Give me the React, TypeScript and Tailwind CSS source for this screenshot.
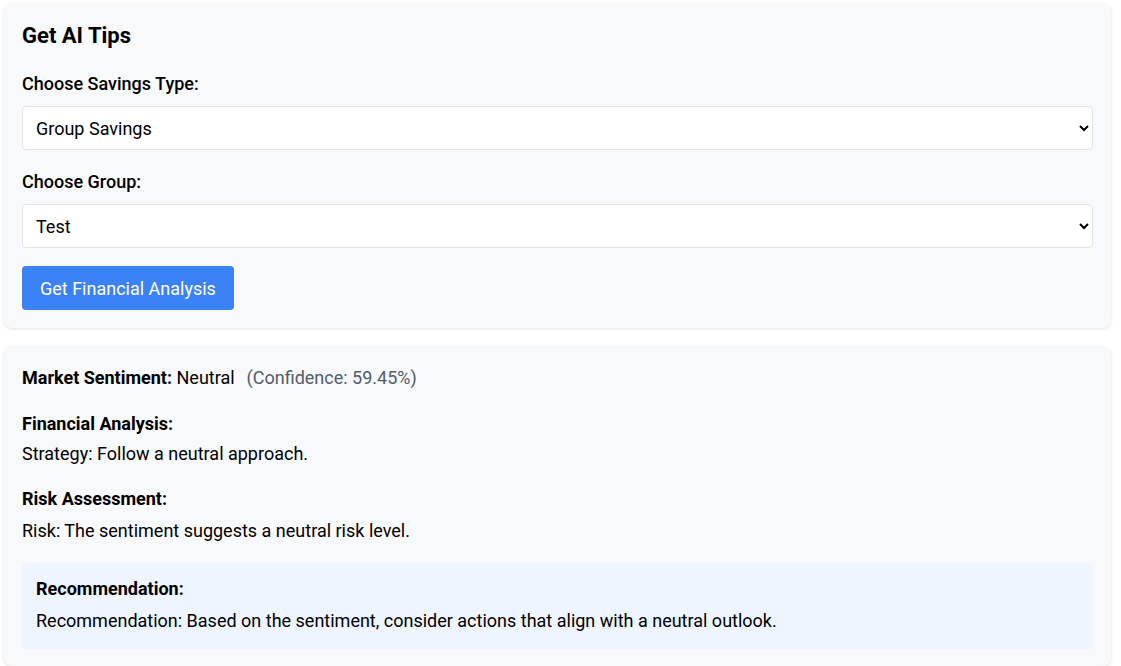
import React from "react";

export default function App() {
  return (
    <div
      className="min-h-screen bg-white pt-[3px] pl-[4px] pr-[10px] text-black"
      style={{ fontFamily: "Roboto, 'Liberation Sans', sans-serif" }}
    >
      <div className="bg-[#f8f9fb] rounded-lg shadow-[0_1px_3px_rgba(0,0,0,0.12)] pt-[19px] px-[18px] pb-[18px]">
        <h2 className="text-[22px] leading-7 font-bold mb-[20px]">Get AI Tips</h2>
        <label className="block text-[18px] leading-[27px] font-medium mb-[9px]">
          Choose Savings Type:
        </label>
        <select
          defaultValue="group"
          className="block w-full h-[44px] bg-white border border-[#e2e4e8] rounded px-[9px] text-[18px] mb-[18px]"
        >
          <option value="personal">Personal Savings</option>
          <option value="group">Group Savings</option>
        </select>
        <label className="block text-[18px] leading-[27px] font-medium mb-[9px]">
          Choose Group:
        </label>
        <select
          defaultValue="test"
          className="block w-full h-[44px] bg-white border border-[#e2e4e8] rounded px-[9px] text-[18px] mb-[18px]"
        >
          <option value="test">Test</option>
        </select>
        <button className="h-[44px] px-[18px] rounded bg-[#3b82f6] text-white text-[18px]">
          Get Financial Analysis
        </button>
      </div>

      <div className="mt-[18px] bg-[#f8f9fb] rounded-lg shadow-[0_1px_3px_rgba(0,0,0,0.12)] pt-[18px] px-[18px] pb-[17px] text-[18px] leading-[27px]">
        <p>
          <span className="font-bold">Market Sentiment:</span> Neutral
          <span className="ml-[12px] text-[#525c6b]">(Confidence: 59.45%)</span>
        </p>
        <p className="mt-[19px] font-bold">Financial Analysis:</p>
        <p className="mt-[3px]">Strategy: Follow a neutral approach.</p>
        <p className="mt-[18px] font-bold">Risk Assessment:</p>
        <p className="mt-[5px]">Risk: The sentiment suggests a neutral risk level.</p>
        <div className="mt-[19px] bg-[#eef5ff] rounded px-[14px] pt-[12px] pb-[15px]">
          <p className="font-bold">Recommendation:</p>
          <p className="mt-[5px]">
            Recommendation: Based on the sentiment, consider actions that align with a neutral outlook.
          </p>
        </div>
      </div>
    </div>
  );
}
